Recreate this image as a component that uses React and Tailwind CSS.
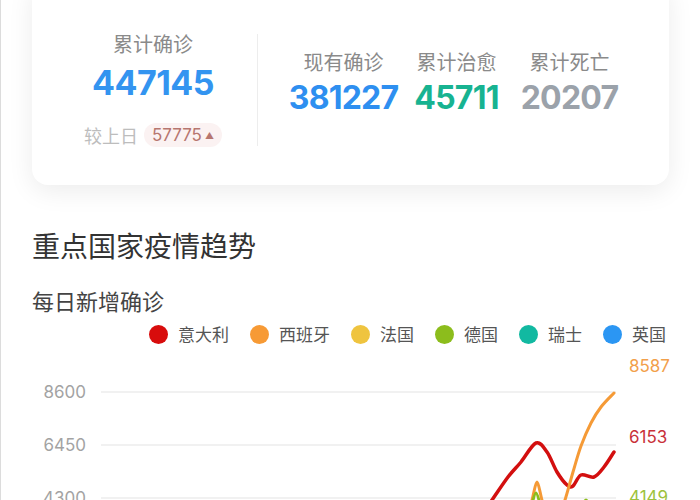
import React from 'react';

const cjk = { fontFamily: '"Noto Sans CJK SC", "Noto Sans", sans-serif' };
const num = { fontFamily: 'Inter, "Noto Sans", sans-serif' };

const legend = [
    { name: '意大利', color: 'bg-[#d80c0c]' },
    { name: '西班牙', color: 'bg-[#f79a35]' },
    { name: '法国', color: 'bg-[#efc43f]' },
    { name: '德国', color: 'bg-[#8cbd1c]' },
    { name: '瑞士', color: 'bg-[#12b9a1]' },
    { name: '英国', color: 'bg-[#2b96f3]' },
];

const stats = [
    { label: '现有确诊', value: '381227', color: 'text-[#2e8ff0]' },
    { label: '累计治愈', value: '45711', color: 'text-[#17b391]' },
    { label: '累计死亡', value: '20207', color: 'text-[#9ba2aa]' },
];

// catmull-rom -> bezier, for the trend lines
function smooth(pts) {
    let d = `M${pts[0][0]},${pts[0][1]}`;
    for (let i = 0; i < pts.length - 1; i++) {
        const p0 = pts[i - 1] || pts[i];
        const p1 = pts[i];
        const p2 = pts[i + 1];
        const p3 = pts[i + 2] || p2;
        const c1 = [p1[0] + (p2[0] - p0[0]) / 6, p1[1] + (p2[1] - p0[1]) / 6];
        const c2 = [p2[0] - (p3[0] - p1[0]) / 6, p2[1] - (p3[1] - p1[1]) / 6];
        d += ` C${c1[0]},${c1[1]} ${c2[0]},${c2[1]} ${p2[0]},${p2[1]}`;
    }
    return d;
}

const italy = [[478, 172], [491, 154], [507, 131], [520, 116], [535, 97], [546, 106], [556, 126], [566, 139], [572, 140], [580, 129], [593, 131], [603, 121], [613, 106]];
const spain = [[557, 172], [564, 154], [572, 126], [580, 100], [590, 77], [600, 61], [613, 47]];
const spainBump = [[528, 168], [532, 150], [536, 136], [540, 150], [544, 168]];
const germanyA = [[530, 162], [535, 147], [540, 162]];
const germanyB = [[580, 162], [585, 154], [590, 162]];

function TrendChart() {
    const grid = [
        { y: 46, label: '8600' },
        { y: 99, label: '6450' },
        { y: 152, label: '4300' },
    ];
    return (
        <svg width="700" height="160" className="block">
            {grid.map(g => (
                <g key={g.label}>
                    <line x1="100" x2="615" y1={g.y} y2={g.y} stroke="#ececec" strokeWidth="1.5" />
                    <text x="85" y={g.y} textAnchor="end" dominantBaseline="central" fill="#a3a3a3" fontSize="17" fontFamily="Inter, sans-serif">
                        {g.label}
                    </text>
                </g>
            ))}
            <path d={smooth(spainBump)} fill="none" stroke="#f59a36" strokeWidth="3" strokeLinecap="round" />
            <path d={smooth(germanyA)} fill="none" stroke="#8cbd1c" strokeWidth="3" strokeLinecap="round" />
            <path d={smooth(germanyB)} fill="none" stroke="#8cbd1c" strokeWidth="3" strokeLinecap="round" />
            <path d={smooth(italy)} fill="none" stroke="#d30f0f" strokeWidth="3.5" strokeLinecap="round" strokeLinejoin="round" />
            <path d={smooth(spain)} fill="none" stroke="#f59a36" strokeWidth="3" strokeLinecap="round" />
            <text x="628" y="20" dominantBaseline="central" fill="#f2a04b" fontSize="17" fontFamily="Inter, sans-serif">8587</text>
            <text x="628" y="91" dominantBaseline="central" fill="#c9313a" fontSize="17" fontFamily="Inter, sans-serif">6153</text>
            <text x="628" y="151" dominantBaseline="central" fill="#9dc23c" fontSize="17" fontFamily="Inter, sans-serif">4149</text>
        </svg>
    );
}

export default function App() {
    return (
        <div className="w-[700px] h-[500px] overflow-hidden bg-white border-l border-[#dcdcdc]" style={cjk}>
            {/* Summary card */}
            <div className="px-[31px]">
                <div className="-mt-[20px] h-[205px] rounded-2xl bg-white shadow-[0_6px_26px_rgba(0,0,0,0.08)] flex items-start pt-[50px]">
                    <div className="w-[225px] pl-[17px] flex flex-col items-center">
                        <div className="h-[28px] leading-[28px] text-[20px] text-[#8a8a8a]">累计确诊</div>
                        <div className="mt-[5px] h-[40px] leading-[40px] text-[34px] font-bold tracking-[-0.5px] text-[#3394f0]" style={num}>447145</div>
                        <div className="mt-[20px] h-[24px] flex items-center gap-[6px]">
                            <span className="text-[18px] text-[#bdbdbd] leading-[24px]">较上日</span>
                            <span className="h-[24px] px-[8px] rounded-full bg-[#fbf2f2] flex items-center gap-[3px] text-[#b7766f]" style={num}>
                                <span className="text-[17px] leading-none">57775</span>
                                <span className="text-[9px] leading-none">▲</span>
                            </span>
                        </div>
                    </div>
                    <div className="mt-[4px] w-px h-[112px] bg-[#ededed]" />
                    <div className="ml-[29px] mt-[18px] flex">
                        {stats.map(s => (
                            <div key={s.label} className="w-[113px] flex flex-col items-center">
                                <div className="h-[28px] leading-[28px] text-[20px] text-[#8a8a8a]">{s.label}</div>
                                <div className={`mt-[3px] h-[38px] leading-[38px] text-[32px] font-bold tracking-[-0.8px] ${s.color}`} style={num}>
                                    {s.value}
                                </div>
                            </div>
                        ))}
                    </div>
                </div>
            </div>

            {/* Trend section */}
            <div className="px-[31px]">
                <h2 className="mt-[40px] h-[40px] leading-[40px] text-[28px] text-[#333]">重点国家疫情趋势</h2>
                <h3 className="mt-[20px] h-[30px] leading-[30px] text-[22px] text-[#444]">每日新增确诊</h3>
                <div className="mt-[7px] h-[24px] pr-[3px] flex items-center justify-end gap-[21px]">
                    {legend.map(l => (
                        <div key={l.name} className="flex items-center gap-[10px]">
                            <span className={`w-[19px] h-[19px] rounded-full ${l.color}`} />
                            <span className="text-[17px] leading-[24px] text-[#555]">{l.name}</span>
                        </div>
                    ))}
                </div>
            </div>
            <TrendChart />
        </div>
    );
}
